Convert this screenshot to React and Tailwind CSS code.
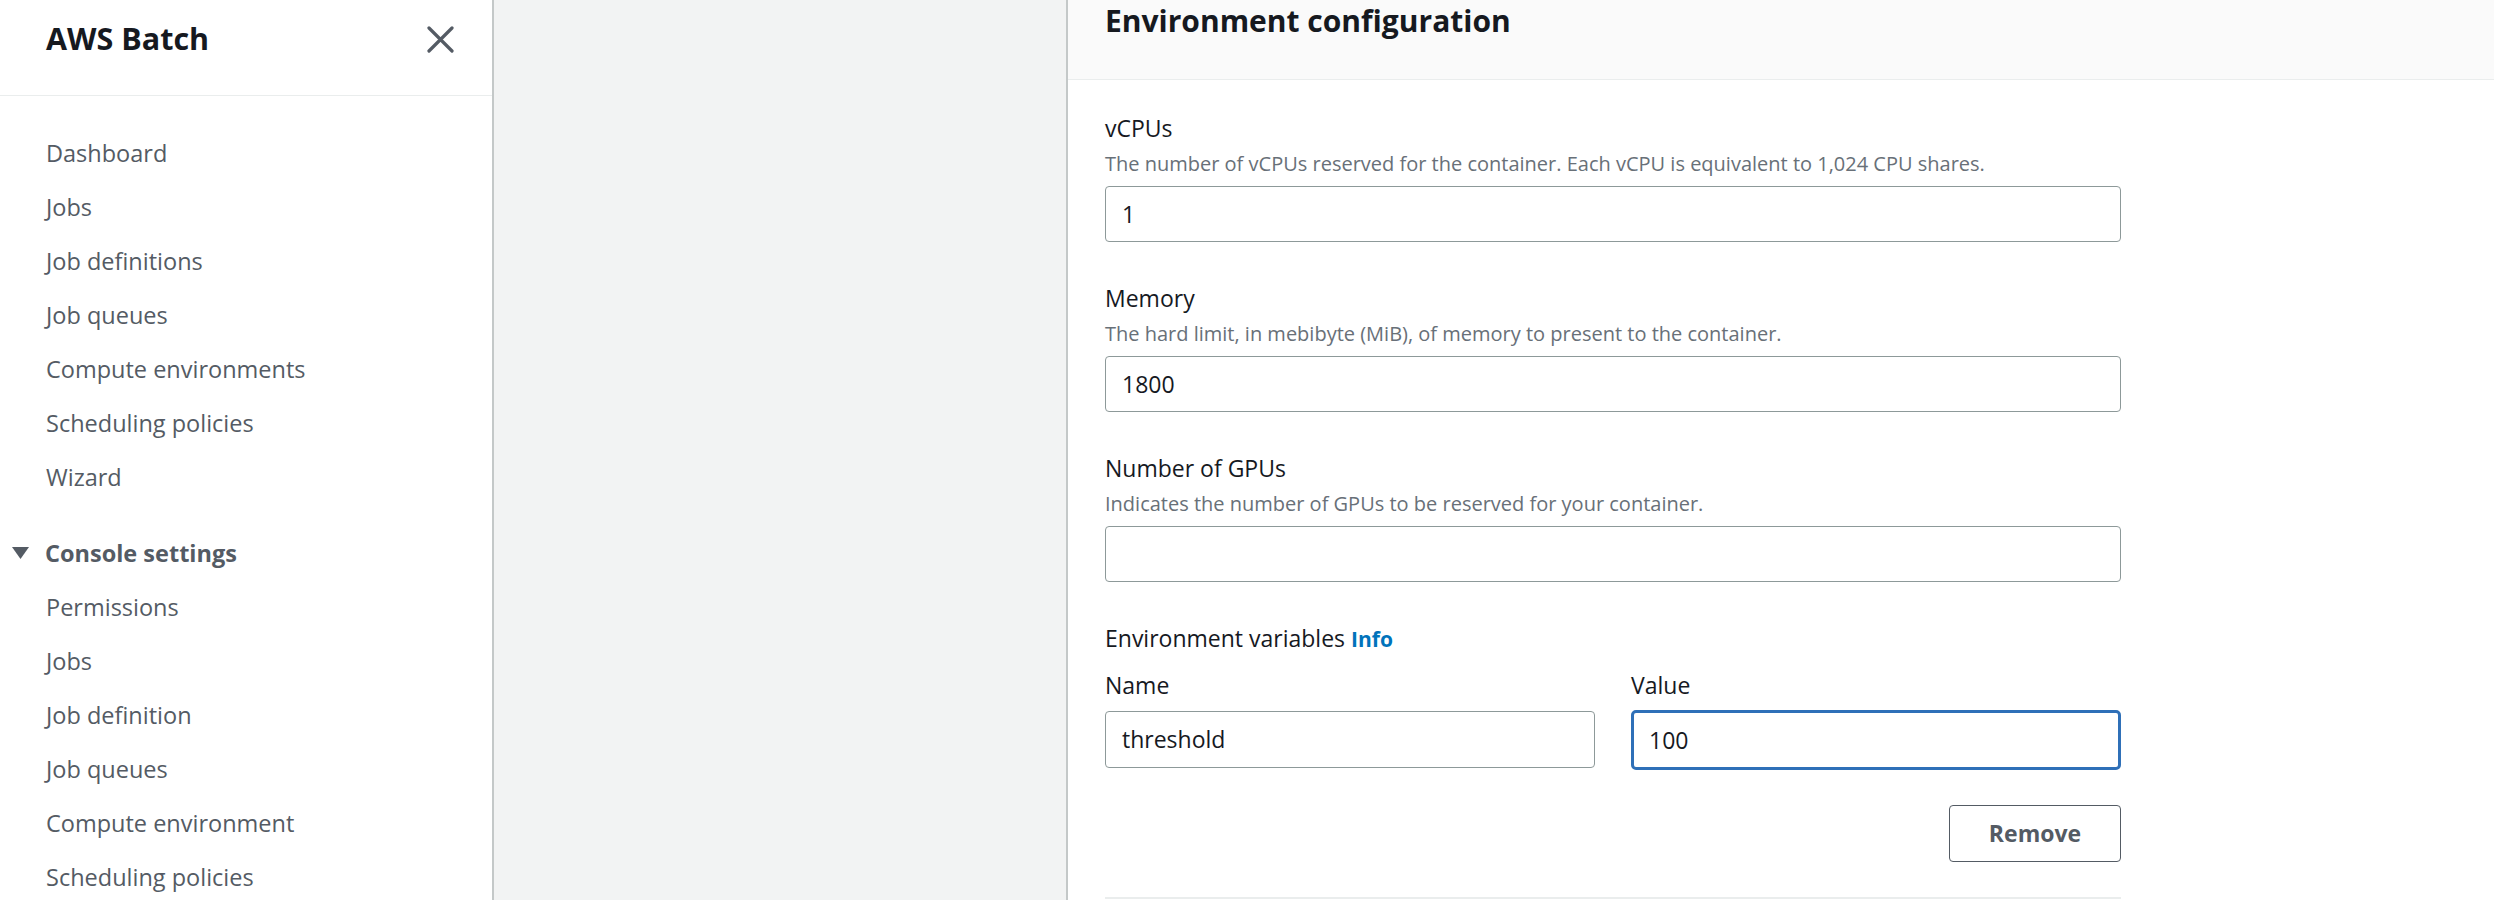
import React from "react";

const mainLinks = [
  "Dashboard",
  "Jobs",
  "Job definitions",
  "Job queues",
  "Compute environments",
  "Scheduling policies",
  "Wizard",
];

const settingsLinks = [
  "Permissions",
  "Jobs",
  "Job definition",
  "Job queues",
  "Compute environment",
  "Scheduling policies",
];

// Single labelled form field
const Field = ({ label, description, value }) => (
  <div className="flex flex-col">
    <div className="text-[23px] leading-[30px] text-[#16191f]">{label}</div>
    <div className="mt-[8px] text-[20px] leading-[26px] text-[#687078]">
      {description}
    </div>
    <div className="mt-[9px] h-[56px] flex items-center px-[16px] border border-[#8d9999] rounded-[4px] bg-white text-[23px] text-[#16191f]">
      {value}
    </div>
  </div>
);

export default function App() {
  return (
    <div
      className="flex h-[900px] w-full overflow-hidden bg-[#f2f3f3]"
      style={{ fontFamily: '"Open Sans", "Liberation Sans", sans-serif' }}
    >
      {/* Sidebar */}
      <aside className="w-[494px] shrink-0 bg-white border-r-2 border-[#c4c8c8] flex flex-col">
        <div className="h-[96px] shrink-0 border-b border-[#eaeded] flex items-start justify-between pl-[46px] pr-[38px]">
          <h1 className="pt-[18px] text-[30.5px] leading-[40px] font-bold text-[#16191f]">
            AWS Batch
          </h1>
          <svg
            className="mt-[26px]"
            width="27"
            height="27"
            viewBox="0 0 27 27"
            fill="none"
            stroke="#545b64"
            strokeWidth="3.2"
            strokeLinecap="round"
          >
            <path d="M2 2 L25 25 M25 2 L2 25" />
          </svg>
        </div>

        <nav className="pt-[30px] text-[23.5px] text-[#545b64]">
          <ul>
            {mainLinks.map((l) => (
              <li key={l} className="pl-[46px] leading-[54px]">
                {l}
              </li>
            ))}
          </ul>
          <div className="mt-[22px] flex items-center leading-[54px]">
            <svg className="ml-[12px] mr-[16px]" width="17" height="12" viewBox="0 0 17 12">
              <path d="M0 0 H17 L8.5 12 Z" fill="#545b64" />
            </svg>
            <span className="font-bold">Console settings</span>
          </div>
          <ul>
            {settingsLinks.map((l, i) => (
              <li key={l + i} className="pl-[46px] leading-[54px]">
                {l}
              </li>
            ))}
          </ul>
        </nav>
      </aside>

      {/* Empty gray area */}
      <div className="w-[572px] shrink-0" />

      {/* Panel */}
      <section className="flex-1 bg-white border-l-2 border-[#c4c8c8] flex flex-col">
        <div className="h-[80px] shrink-0 bg-[#fafafa] border-b border-[#eaeded] pl-[37px] pt-[1px]">
          <h2 className="text-[30px] leading-[39px] font-bold text-[#16191f]">
            Environment configuration
          </h2>
        </div>

        <div className="pl-[37px] pt-[33px]">
          <div className="w-[1016px] flex flex-col gap-[41px]">
            <Field
              label="vCPUs"
              description="The number of vCPUs reserved for the container. Each vCPU is equivalent to 1,024 CPU shares."
              value="1"
            />
            <Field
              label="Memory"
              description="The hard limit, in mebibyte (MiB), of memory to present to the container."
              value="1800"
            />
            <Field
              label="Number of GPUs"
              description="Indicates the number of GPUs to be reserved for your container."
              value=""
            />

            <div className="flex flex-col">
              <div className="text-[23px] leading-[30px] text-[#16191f]">
                Environment variables{" "}
                <span className="text-[21px] font-bold text-[#0073bb]">Info</span>
              </div>
              <div className="mt-[16px] grid grid-cols-2 gap-x-[36px]">
                <div className="text-[23px] leading-[30px] text-[#16191f]">Name</div>
                <div className="text-[23px] leading-[30px] text-[#16191f]">Value</div>
                <div className="mt-[11px] h-[57px] flex items-center px-[16px] border border-[#8d9999] rounded-[4px] text-[23px] text-[#16191f]">
                  threshold
                </div>
                <div className="mt-[10px] h-[60px] flex items-center px-[15px] border-[3px] border-[#2f70b8] rounded-[5px] text-[23px] text-[#16191f]">
                  100
                </div>
              </div>
              <div className="mt-[35px] flex justify-end">
                <button className="w-[172px] h-[57px] border border-[#545b64] rounded-[4px] bg-white text-[23px] font-bold text-[#545b64]">
                  Remove
                </button>
              </div>
              <div className="mt-[35px] border-t-2 border-[#eaeded]" />
            </div>
          </div>
        </div>
      </section>
    </div>
  );
}
